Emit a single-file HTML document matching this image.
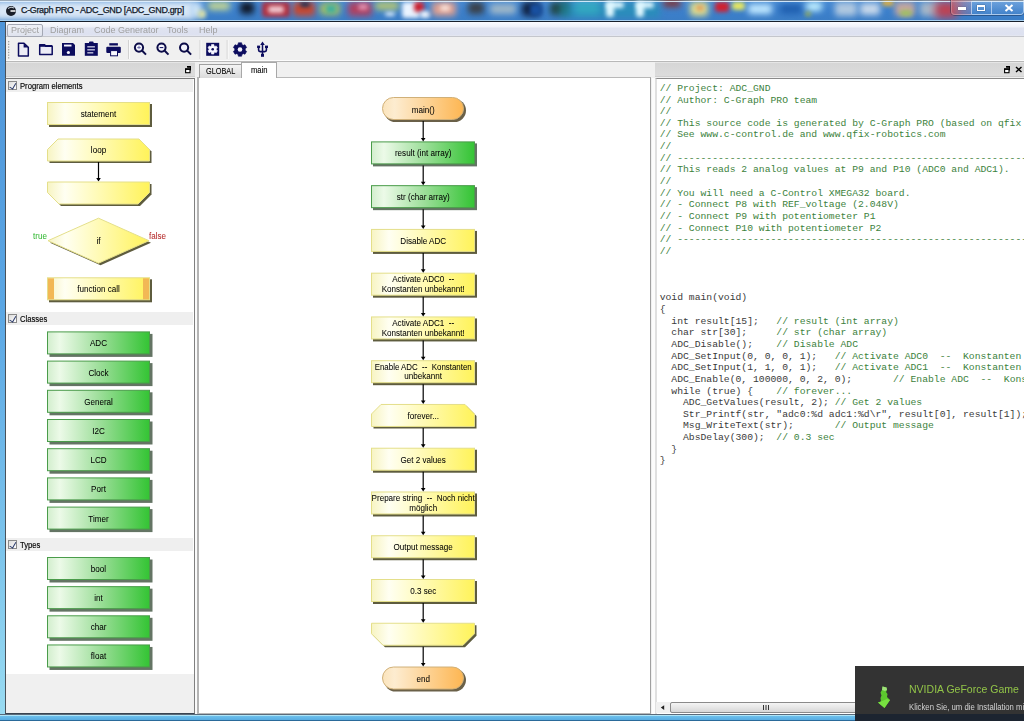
<!DOCTYPE html>
<html><head><meta charset="utf-8">
<style>
*{box-sizing:border-box}
html,body{margin:0;padding:0}
body{width:1024px;height:721px;overflow:hidden;position:relative;background:#f0f0f0;font-family:"Liberation Sans",sans-serif;color:#000}
.a{position:absolute}
#title{left:0;top:0;width:1024px;height:22px;background:linear-gradient(#4a8cd4,#3c80cc 50%,#3a7cc4);overflow:hidden}
#frameL{left:0;top:22px;width:5px;height:700px;background:linear-gradient(#4e94d8,#5aa6e4 40%,#7cc4ec 75%,#9adcf2)}
#frameB{left:0;top:714px;width:1024px;height:7px;background:linear-gradient(#5a6a7a 0,#5a6a7a 1px,#b0e4f6 1px,#b0e4f6 2px,#6cc0ec 2px,#58ace2 6px,#2a6a9a 6px)}
#menubar{left:5px;top:22px;width:1019px;height:15px;background:linear-gradient(#fbfcff,#eef0f8 5px,#dfe3f0 6px,#dde1f0 13px,#e8eaf0 14px);border-bottom:1px solid #c4c6cc}
#toolbar{left:5px;top:37px;width:1019px;height:25px;background:linear-gradient(#f0f0f0 23px,#fcfcfc 23px);border-bottom:1px solid #b8b8b8}
.menu{position:absolute;top:3px;font-size:9px;color:#a0a0a0;will-change:transform}
.lph{background:linear-gradient(#d6d6d6,#dcdcdc);border-top:1px solid #e6e6e6;border-bottom:1px solid #cfcfcf}
.grp{position:absolute;left:6px;width:187px;height:13px;background:#efefef}
.grp .cb{position:absolute;left:1.5px;top:2px;width:9px;height:9px;border:1px solid #8a8a8a;background:linear-gradient(135deg,#dcdcdc,#fff)}
.grp .cb::after{content:"";position:absolute;left:2px;top:0px;width:2.5px;height:5.5px;border:solid #2a3a6a;border-width:0 1.2px 1.2px 0;transform:rotate(30deg)}
.grp span{position:absolute;left:14px;top:1.5px;font-size:8.5px;transform:scaleX(0.9);transform-origin:0 0;white-space:nowrap;-webkit-text-stroke:0.15px #000}
pre#code{position:absolute;left:659.7px;top:82.9px;margin:0;font-family:"Liberation Mono",monospace;font-size:9.73px;line-height:11.64px;color:#3a3a3a}
.cm{color:#3c823c}
</style></head><body>
<div id="title" class="a">
<div class="a" style="left:0;top:0;width:1024px;height:1px;background:#6a7a8a"></div>
<div class="a" style="left:-6px;top:1px;width:200px;height:19px;background:rgba(225,236,248,0.95);border-radius:3px;filter:blur(3px)"></div>
<div class="a" style="left:190px;top:2px;width:12px;height:16px;background:#cce4f8;border-radius:3px;filter:blur(3px)"></div>
<div class="a" style="left:198px;top:10px;width:8px;height:8px;background:#d8e0a8;border-radius:3px;filter:blur(2px)"></div>
<div class="a" style="left:208px;top:2px;width:22px;height:8px;background:#c8d890;border-radius:3px;filter:blur(3px)"></div>
<div class="a" style="left:240px;top:2px;width:14px;height:12px;background:#101828;border-radius:3px;filter:blur(3px)"></div>
<div class="a" style="left:262px;top:2px;width:28px;height:15px;background:#b03040;border-radius:3px;filter:blur(2px)"></div>
<div class="a" style="left:268px;top:6px;width:16px;height:7px;background:#f0c8d0;border-radius:3px;filter:blur(2px)"></div>
<div class="a" style="left:293px;top:2px;width:22px;height:14px;background:#c84830;border-radius:3px;filter:blur(3px)"></div>
<div class="a" style="left:300px;top:2px;width:10px;height:5px;background:#203050;border-radius:3px;filter:blur(2px)"></div>
<div class="a" style="left:320px;top:3px;width:20px;height:12px;background:#a8c060;border-radius:3px;filter:blur(3px)"></div>
<div class="a" style="left:326px;top:5px;width:10px;height:8px;background:#40b0a0;border-radius:3px;filter:blur(2px)"></div>
<div class="a" style="left:348px;top:2px;width:24px;height:14px;background:#b04060;border-radius:3px;filter:blur(3px)"></div>
<div class="a" style="left:358px;top:4px;width:10px;height:6px;background:#e090b0;border-radius:3px;filter:blur(2px)"></div>
<div class="a" style="left:375px;top:2px;width:24px;height:8px;background:#b8c870;border-radius:3px;filter:blur(3px)"></div>
<div class="a" style="left:385px;top:12px;width:10px;height:4px;background:#e0f0ff;border-radius:3px;filter:blur(2px)"></div>
<div class="a" style="left:402px;top:2px;width:18px;height:16px;background:#eaf4ff;border-radius:3px;filter:blur(2px)"></div>
<div class="a" style="left:414px;top:2px;width:10px;height:10px;background:#c82030;border-radius:3px;filter:blur(2px)"></div>
<div class="a" style="left:420px;top:11px;width:10px;height:7px;background:#f0f6ff;border-radius:3px;filter:blur(2px)"></div>
<div class="a" style="left:432px;top:2px;width:24px;height:14px;background:#e0a090;border-radius:3px;filter:blur(3px)"></div>
<div class="a" style="left:440px;top:5px;width:10px;height:6px;background:#f6e0d8;border-radius:3px;filter:blur(2px)"></div>
<div class="a" style="left:468px;top:2px;width:16px;height:12px;background:#3a4048;border-radius:3px;filter:blur(3px)"></div>
<div class="a" style="left:490px;top:4px;width:26px;height:10px;background:#a0b8c8;border-radius:3px;filter:blur(3px)"></div>
<div class="a" style="left:522px;top:2px;width:18px;height:14px;background:#102040;border-radius:3px;filter:blur(3px)"></div>
<div class="a" style="left:530px;top:4px;width:12px;height:12px;background:#1850a0;border-radius:3px;filter:blur(2px)"></div>
<div class="a" style="left:550px;top:2px;width:20px;height:13px;background:#204848;border-radius:3px;filter:blur(3px)"></div>
<div class="a" style="left:575px;top:2px;width:24px;height:12px;background:#50c0d8;border-radius:3px;filter:blur(3px)"></div>
<div class="a" style="left:560px;top:2px;width:100px;height:16px;background:rgba(32,150,176,0.6);border-radius:3px;filter:blur(3px)"></div>
<div class="a" style="left:606px;top:2px;width:18px;height:6px;background:#e0f8ff;border-radius:3px;filter:blur(2px)"></div>
<div class="a" style="left:606px;top:2px;width:8px;height:15px;background:#e0f8ff;border-radius:3px;filter:blur(2px)"></div>
<div class="a" style="left:636px;top:2px;width:18px;height:6px;background:#e0f8ff;border-radius:3px;filter:blur(2px)"></div>
<div class="a" style="left:636px;top:2px;width:8px;height:15px;background:#e0f8ff;border-radius:3px;filter:blur(2px)"></div>
<div class="a" style="left:663px;top:0px;width:18px;height:7px;background:#803030;border-radius:3px;filter:blur(3px)"></div>
<div class="a" style="left:690px;top:2px;width:18px;height:14px;background:#e0e090;border-radius:3px;filter:blur(3px)"></div>
<div class="a" style="left:696px;top:5px;width:8px;height:6px;background:#e0a060;border-radius:3px;filter:blur(2px)"></div>
<div class="a" style="left:715px;top:2px;width:14px;height:10px;background:#d02030;border-radius:3px;filter:blur(2px)"></div>
<div class="a" style="left:732px;top:2px;width:13px;height:8px;background:#e8e860;border-radius:3px;filter:blur(2px)"></div>
<div class="a" style="left:748px;top:4px;width:24px;height:10px;background:#c0e8ff;border-radius:3px;filter:blur(3px)"></div>
<div class="a" style="left:780px;top:4px;width:22px;height:10px;background:#2060b0;border-radius:3px;filter:blur(3px)"></div>
<div class="a" style="left:806px;top:2px;width:16px;height:9px;background:#c0f0ff;border-radius:3px;filter:blur(3px)"></div>
<div class="a" style="left:805px;top:12px;width:6px;height:4px;background:#a0b040;border-radius:3px;filter:blur(2px)"></div>
<div class="a" style="left:835px;top:2px;width:22px;height:14px;background:#b0c8e0;border-radius:3px;filter:blur(3px)"></div>
<div class="a" style="left:860px;top:3px;width:20px;height:12px;background:#c8d8ea;border-radius:3px;filter:blur(3px)"></div>
<div class="a" style="left:882px;top:0px;width:12px;height:6px;background:#e0b040;border-radius:3px;filter:blur(2px)"></div>
<div class="a" style="left:895px;top:2px;width:20px;height:14px;background:#c8a8a0;border-radius:3px;filter:blur(3px)"></div>
<div class="a" style="left:900px;top:10px;width:12px;height:6px;background:#a0c060;border-radius:3px;filter:blur(2px)"></div>
<div class="a" style="left:920px;top:2px;width:20px;height:14px;background:#a8b8c8;border-radius:3px;filter:blur(3px)"></div>
<div class="a" style="left:935px;top:2px;width:22px;height:16px;background:#c04050;border-radius:3px;filter:blur(4px)"></div>
<div class="a" style="left:0;top:1px;width:1024px;height:1px;background:rgba(230,245,255,0.85)"></div>
<div class="a" style="left:0;top:20px;width:1024px;height:1px;background:#a8d0f0"></div><div class="a" style="left:0;top:21px;width:1024px;height:1px;background:#18202c"></div>
<svg class="a" style="left:5px;top:5px" width="12" height="12"><circle cx="6" cy="6" r="5" fill="#1a1e28"/><path d="M3,3.5 Q6,1 9,3" stroke="#d0d8e0" stroke-width="1" fill="none"/><path d="M5.5,6 H10.5" stroke="#f0f0f0" stroke-width="1.6"/></svg>
<span class="a" style="left:21px;top:5px;font-size:9px;letter-spacing:-0.35px;color:#101828;-webkit-text-stroke:0.25px #101828;white-space:nowrap">C-Graph PRO - ADC_GND [ADC_GND.grp]</span>
<div class="a" style="left:951px;top:0;width:73px;height:15px;border:1px solid rgba(230,240,255,0.55);border-top:none;border-radius:0 0 4px 4px;box-shadow:0 0 0 1px rgba(20,40,70,0.45);background:linear-gradient(rgba(255,255,255,0.22),rgba(120,160,210,0.15))"></div>
<div class="a" style="left:951px;top:0;width:21px;height:15px;border-radius:0 0 0 3px;background:linear-gradient(90deg,rgba(200,80,90,0.55),rgba(150,110,150,0.25))"></div>
<div class="a" style="left:971px;top:1px;width:1px;height:13px;background:rgba(230,240,255,0.6)"></div>
<div class="a" style="left:991px;top:1px;width:1px;height:13px;background:rgba(230,240,255,0.6)"></div>
<div class="a" style="left:958px;top:7px;width:8px;height:2.5px;background:#fff;box-shadow:0 0 1px #234"></div>
<div class="a" style="left:977px;top:4.5px;width:8px;height:6px;border:1px solid #fff;border-top-width:2px;box-shadow:0 0 1px #234"></div>
<svg class="a" style="left:1004px;top:4px" width="10" height="8"><path d="M1.5,1 L8.5,7 M8.5,1 L1.5,7" stroke="#fff" stroke-width="2"/></svg>
</div>
<div id="frameL" class="a"></div>
<div id="menubar" class="a">
  <div class="a" style="left:2px;top:1.5px;width:36px;height:13px;border:1px solid #a4a8b4;border-radius:2px;background:linear-gradient(#eef0f6,#dfe3ee)"></div>
  <span class="menu" style="left:6px">Project</span>
  <span class="menu" style="left:45px">Diagram</span>
  <span class="menu" style="left:89px">Code Generator</span>
  <span class="menu" style="left:162px">Tools</span>
  <span class="menu" style="left:194px">Help</span>
</div>
<div id="toolbar" class="a"></div>
<svg class="a" style="left:0;top:0" width="1024" height="62" viewBox="0 0 1024 62"><rect x="8" y="41.0" width="1.3" height="1.3" fill="#a0a0a0"/>
<rect x="8" y="43.7" width="1.3" height="1.3" fill="#a0a0a0"/>
<rect x="8" y="46.4" width="1.3" height="1.3" fill="#a0a0a0"/>
<rect x="8" y="49.1" width="1.3" height="1.3" fill="#a0a0a0"/>
<rect x="8" y="51.8" width="1.3" height="1.3" fill="#a0a0a0"/>
<rect x="8" y="54.5" width="1.3" height="1.3" fill="#a0a0a0"/>
<rect x="8" y="57.2" width="1.3" height="1.3" fill="#a0a0a0"/>
<path d="M18.5,43.2 H24 L28.3,47.2 V56 H18.5 Z" fill="#ececf6" stroke="#0c0c5e" stroke-width="1.5" stroke-linejoin="round"/>
<path d="M23.6,43.2 V47.6 H28.3 Z" fill="#0c0c5e"/>
<path d="M39.7,54.6 V44.7 H44.6 L45.8,46.3 H52.2 V54.6 Z" fill="#ececf6" stroke="#0c0c5e" stroke-width="1.5" stroke-linejoin="round"/>
<rect x="39.7" y="45" width="12.5" height="1.8" fill="#0c0c5e"/>
<path d="M62,43 H73 L75,45 V55.8 H62 Z" fill="#0c0c5e"/>
<rect x="64" y="44.6" width="7.5" height="1.9" fill="#f4f4ff"/>
<circle cx="68.4" cy="52.5" r="1.6" fill="#f4f4ff"/>
<rect x="84.8" y="43" width="13" height="12.8" fill="#0c0c5e"/>
<rect x="89" y="41.6" width="4.6" height="2.5" rx="1" fill="#0c0c5e"/>
<rect x="87.3" y="46.3" width="7.6" height="1.1" fill="#f4f4ff"/>
<rect x="87.3" y="49.3" width="7.6" height="1.1" fill="#f4f4ff"/>
<rect x="87.3" y="52.3" width="6" height="1.1" fill="#f4f4ff"/>
<rect x="109.3" y="43.2" width="8.6" height="2.3" fill="#0c0c5e"/>
<rect x="106.3" y="46.8" width="14.5" height="6.3" rx="1" fill="#0c0c5e"/>
<rect x="110.6" y="50.6" width="6.9" height="5.2" fill="#fafaff" stroke="#0c0c5e" stroke-width="1"/>
<rect x="128" y="40" width="1" height="19" fill="#d2d2d2"/><rect x="129" y="40" width="1" height="19" fill="#fafafa"/>
<rect x="199.5" y="40" width="1" height="19" fill="#d2d2d2"/><rect x="200.5" y="40" width="1" height="19" fill="#fafafa"/>
<rect x="226.7" y="40" width="1" height="19" fill="#d2d2d2"/><rect x="227.7" y="40" width="1" height="19" fill="#fafafa"/>
<circle cx="139" cy="47.6" r="4.1" fill="#f4f4fc" stroke="#0c0c48" stroke-width="2"/>
<line x1="142.2" y1="50.800000000000004" x2="146" y2="54.6" stroke="#0c0c48" stroke-width="2"/>
<path d="M137.2,47.6 H140.8 M139,45.800000000000004 V48.800000000000004" stroke="#6060a0" stroke-width="0.9"/>
<circle cx="161.5" cy="47.6" r="4.1" fill="#f4f4fc" stroke="#0c0c48" stroke-width="2"/>
<line x1="164.7" y1="50.800000000000004" x2="168.5" y2="54.6" stroke="#0c0c48" stroke-width="2"/>
<path d="M159.7,47.6 H163.3" stroke="#0c0c5e" stroke-width="1"/>
<circle cx="184.1" cy="47.6" r="4.1" fill="#f4f4fc" stroke="#0c0c48" stroke-width="2"/>
<line x1="187.29999999999998" y1="50.800000000000004" x2="191.1" y2="54.6" stroke="#0c0c48" stroke-width="2"/>
<rect x="206.2" y="42.8" width="13" height="13" fill="#0c0c5e"/>
<polygon points="211.39,45.95 211.52,44.54 213.88,44.54 214.01,45.95 214.95,46.49 216.23,45.90 217.41,47.95 216.26,48.76 216.26,49.84 217.41,50.65 216.23,52.70 214.95,52.11 214.01,52.65 213.88,54.06 211.52,54.06 211.39,52.65 210.45,52.11 209.17,52.70 207.99,50.65 209.14,49.84 209.14,48.76 207.99,47.95 209.17,45.90 210.45,46.49" fill="#f6f6ff" stroke="#f6f6ff" stroke-width="0.6" stroke-linejoin="round"/>
<circle cx="212.7" cy="49.3" r="1.3" fill="#0c0c5e"/>
<polygon points="238.07,44.57 238.34,42.80 241.66,42.80 241.93,44.57 243.31,45.36 244.97,44.71 246.63,47.59 245.24,48.71 245.24,50.29 246.63,51.41 244.97,54.29 243.31,53.64 241.93,54.43 241.66,56.20 238.34,56.20 238.07,54.43 236.69,53.64 235.03,54.29 233.37,51.41 234.76,50.29 234.76,48.71 233.37,47.59 235.03,44.71 236.69,45.36" fill="#0c0c5e" stroke="#0c0c5e" stroke-width="0.6" stroke-linejoin="round"/>
<circle cx="240" cy="49.5" r="2.3" fill="#f4f4fc"/>
<path d="M262.5,43.8 V55" stroke="#0c0c5e" stroke-width="1.5"/>
<polygon points="262.5,41.5 260.2,44.9 264.8,44.9" fill="#0c0c5e"/>
<path d="M258.6,47 V50 Q258.6,51.6 260.2,51.6 H264.8 Q266.4,51.6 266.4,50 V47" fill="none" stroke="#0c0c5e" stroke-width="1.6"/>
<rect x="257.1" y="45.6" width="3" height="2.4" fill="#0c0c5e"/><rect x="265" y="45.6" width="3" height="2.4" fill="#0c0c5e"/>
<rect x="261" y="53.8" width="3" height="3" fill="#0c0c5e"/></svg>

<!-- left panel -->
<div class="a lph" style="left:5px;top:62px;width:190px;height:15px"></div>
<div class="a" style="left:5px;top:78px;width:190px;height:636px;background:#fff;border:1px solid #7a7a7a;border-left-color:#4a525a;border-right-color:#808080;border-bottom-color:#3a4450"></div>
<div class="a" style="left:5px;top:22px;width:1px;height:56px;background:#4a525a"></div>
<div class="a" style="left:6px;top:674px;width:188px;height:39px;background:#f0f0f0"></div>
<div class="grp" style="top:79px"><div class="cb"></div><span>Program elements</span></div>
<div class="grp" style="top:312px"><div class="cb"></div><span>Classes</span></div>
<div class="grp" style="top:538px"><div class="cb"></div><span>Types</span></div>

<!-- middle panel -->
<div class="a" style="left:195px;top:78px;width:2px;height:636px;background:#fafafa"></div>
<div class="a" style="left:197px;top:77px;width:454px;height:637px;background:#fff;border:1px solid #b8b8b8;border-left:2px solid #b4b4b4;border-right:1px solid #a0a0a0"></div>
<div class="a" style="left:652px;top:78px;width:3px;height:636px;background:#fcfcfc"></div>

<!-- right panel -->
<div class="a lph" style="left:655px;top:62px;width:369px;height:15px"></div>
<div class="a" style="left:655px;top:78px;width:369px;height:636px;background:#fff;border-left:2px solid #e0e0e0;border-top:1px solid #8a8a8a;overflow:hidden"></div>
<pre id="code"><span class="cm">// Project: ADC_GND</span>
<span class="cm">// Author: C-Graph PRO team</span>
<span class="cm">//</span>
<span class="cm">// This source code is generated by C-Graph PRO (based on qfix robotics)</span>
<span class="cm">// See www.c-control.de and www.qfix-robotics.com</span>
<span class="cm">//</span>
<span class="cm">// --------------------------------------------------------------------------------</span>
<span class="cm">// This reads 2 analog values at P9 and P10 (ADC0 and ADC1).</span>
<span class="cm">//</span>
<span class="cm">// You will need a C-Control XMEGA32 board.</span>
<span class="cm">// - Connect P8 with REF_voltage (2.048V)</span>
<span class="cm">// - Connect P9 with potentiometer P1</span>
<span class="cm">// - Connect P10 with potentiometer P2</span>
<span class="cm">// --------------------------------------------------------------------------------</span>
<span class="cm">//</span>



void main(void)
{
  int result[15];   <span class="cm">// result (int array)</span>
  char str[30];     <span class="cm">// str (char array)</span>
  ADC_Disable();    <span class="cm">// Disable ADC</span>
  ADC_SetInput(0, 0, 0, 1);   <span class="cm">// Activate ADC0  --  Konstanten unbekannt!</span>
  ADC_SetInput(1, 1, 0, 1);   <span class="cm">// Activate ADC1  --  Konstanten unbekannt!</span>
  ADC_Enable(0, 100000, 0, 2, 0);       <span class="cm">// Enable ADC  --  Konstanten unbekannt</span>
  while (true) {    <span class="cm">// forever...</span>
    ADC_GetValues(result, 2); <span class="cm">// Get 2 values</span>
    Str_Printf(str, &quot;adc0:%d adc1:%d\r&quot;, result[0], result[1]);
    Msg_WriteText(str);       <span class="cm">// Output message</span>
    AbsDelay(300);  <span class="cm">// 0.3 sec</span>
  }
}</pre>

<svg class="a" style="left:0;top:0" width="1024" height="721" viewBox="0 0 1024 721" font-family="Liberation Sans"><defs>
<linearGradient id="gy" x1="0" x2="1" y1="0" y2="0"><stop offset="0" stop-color="#f7f4c2"/><stop offset="0.17" stop-color="#fffff2"/><stop offset="1" stop-color="#fff35a"/></linearGradient>
<linearGradient id="gg" x1="0" x2="1" y1="0" y2="0"><stop offset="0" stop-color="#d2eecd"/><stop offset="0.12" stop-color="#ecfae8"/><stop offset="0.5" stop-color="#9fdf9c"/><stop offset="1" stop-color="#34c434"/></linearGradient>
<linearGradient id="go" x1="0" x2="1" y1="0" y2="0"><stop offset="0" stop-color="#fbe4bc"/><stop offset="0.15" stop-color="#fdecd0"/><stop offset="1" stop-color="#fdb652"/></linearGradient>
</defs>
<rect x="384" y="99" width="82" height="23" rx="11.5" fill="#6a6048"/><rect x="382.5" y="97.5" width="81" height="22" rx="11.0" fill="url(#go)" stroke="#d0b078" stroke-width="1"/>
<text transform="translate(423.2,112.6) scale(0.93,1)" font-size="8.7" text-anchor="middle" fill="#000" stroke="#000" stroke-width="0.04">main()</text>
<rect x="373" y="143.4" width="104" height="23" fill="#647464"/><rect x="371.5" y="141.9" width="103" height="22" fill="url(#gg)" stroke="#4a9c4a" stroke-width="1"/>
<text transform="translate(423.2,156.4) scale(0.93,1)" font-size="8.7" text-anchor="middle" fill="#000" stroke="#000" stroke-width="0.04">result (int array)</text>
<rect x="373" y="187.16" width="104" height="23" fill="#647464"/><rect x="371.5" y="185.66" width="103" height="22" fill="url(#gg)" stroke="#4a9c4a" stroke-width="1"/>
<text transform="translate(423.2,200.16) scale(0.93,1)" font-size="8.7" text-anchor="middle" fill="#000" stroke="#000" stroke-width="0.04">str (char array)</text>
<rect x="373" y="230.92000000000002" width="104" height="23" fill="#5e5c3e"/><rect x="371.5" y="229.42000000000002" width="103" height="22" fill="url(#gy)" stroke="#e4df8a" stroke-width="1"/>
<text transform="translate(423.2,243.92000000000002) scale(0.93,1)" font-size="8.7" text-anchor="middle" fill="#000" stroke="#000" stroke-width="0.04">Disable ADC</text>
<rect x="373" y="274.68" width="104" height="23" fill="#5e5c3e"/><rect x="371.5" y="273.18" width="103" height="22" fill="url(#gy)" stroke="#e4df8a" stroke-width="1"/>
<text transform="translate(423.2,282.48) scale(0.93,1)" font-size="8.7" text-anchor="middle" fill="#000" stroke="#000" stroke-width="0.04">Activate ADC0&#160; --</text>
<text transform="translate(423.2,291.88) scale(0.93,1)" font-size="8.7" text-anchor="middle" fill="#000" stroke="#000" stroke-width="0.04">Konstanten unbekannt!</text>
<rect x="373" y="318.44" width="104" height="23" fill="#5e5c3e"/><rect x="371.5" y="316.94" width="103" height="22" fill="url(#gy)" stroke="#e4df8a" stroke-width="1"/>
<text transform="translate(423.2,326.24) scale(0.93,1)" font-size="8.7" text-anchor="middle" fill="#000" stroke="#000" stroke-width="0.04">Activate ADC1&#160; --</text>
<text transform="translate(423.2,335.64) scale(0.93,1)" font-size="8.7" text-anchor="middle" fill="#000" stroke="#000" stroke-width="0.04">Konstanten unbekannt!</text>
<rect x="373" y="362.2" width="104" height="23" fill="#5e5c3e"/><rect x="371.5" y="360.7" width="103" height="22" fill="url(#gy)" stroke="#e4df8a" stroke-width="1"/>
<text transform="translate(423.2,370.0) scale(0.91,1)" font-size="8.7" text-anchor="middle" fill="#000" stroke="#000" stroke-width="0.04">Enable ADC&#160; --&#160; Konstanten</text>
<text transform="translate(423.2,379.4) scale(0.93,1)" font-size="8.7" text-anchor="middle" fill="#000" stroke="#000" stroke-width="0.04">unbekannt</text>
<polygon points="373.5,428.46000000000004 373.5,415.96000000000004 383,406.46000000000004 467,406.46000000000004 476.5,415.96000000000004 476.5,428.46000000000004" fill="#5e5c3e"/><polygon points="371.5,426.46000000000004 371.5,413.96000000000004 381,404.46000000000004 465,404.46000000000004 474.5,413.96000000000004 474.5,426.46000000000004" fill="url(#gy)" stroke="#e4df8a" stroke-width="1"/>
<text transform="translate(423.2,418.96000000000004) scale(0.93,1)" font-size="8.7" text-anchor="middle" fill="#000" stroke="#000" stroke-width="0.04">forever...</text>
<rect x="373" y="449.72" width="104" height="23" fill="#5e5c3e"/><rect x="371.5" y="448.22" width="103" height="22" fill="url(#gy)" stroke="#e4df8a" stroke-width="1"/>
<text transform="translate(423.2,462.72) scale(0.93,1)" font-size="8.7" text-anchor="middle" fill="#000" stroke="#000" stroke-width="0.04">Get 2 values</text>
<rect x="373" y="493.48" width="104" height="23" fill="#5e5c3e"/><rect x="371.5" y="491.98" width="103" height="22" fill="url(#gy)" stroke="#e4df8a" stroke-width="1"/>
<text transform="translate(423.2,501.28000000000003) scale(0.93,1)" font-size="8.7" text-anchor="middle" fill="#000" stroke="#000" stroke-width="0.04">Prepare string&#160; --&#160; Noch nicht</text>
<text transform="translate(423.2,510.68) scale(0.93,1)" font-size="8.7" text-anchor="middle" fill="#000" stroke="#000" stroke-width="0.04">möglich</text>
<rect x="373" y="537.24" width="104" height="23" fill="#5e5c3e"/><rect x="371.5" y="535.74" width="103" height="22" fill="url(#gy)" stroke="#e4df8a" stroke-width="1"/>
<text transform="translate(423.2,550.24) scale(0.93,1)" font-size="8.7" text-anchor="middle" fill="#000" stroke="#000" stroke-width="0.04">Output message</text>
<rect x="373" y="581.0" width="104" height="23" fill="#5e5c3e"/><rect x="371.5" y="579.5" width="103" height="22" fill="url(#gy)" stroke="#e4df8a" stroke-width="1"/>
<text transform="translate(423.2,594.0) scale(0.93,1)" font-size="8.7" text-anchor="middle" fill="#000" stroke="#000" stroke-width="0.04">0.3 sec</text>
<polygon points="373.5,625.26 476.5,625.26 476.5,635.76 465,647.26 385,647.26 373.5,635.76" fill="#5e5c3e"/><polygon points="371.5,623.26 474.5,623.26 474.5,633.76 463,645.26 383,645.26 371.5,633.76" fill="url(#gy)" stroke="#e4df8a" stroke-width="1"/>
<rect x="384" y="668.52" width="82" height="23" rx="11.5" fill="#6a6048"/><rect x="382.5" y="667.02" width="81" height="22" rx="11.0" fill="url(#go)" stroke="#d0b078" stroke-width="1"/>
<text transform="translate(423.2,681.8199999999999) scale(0.93,1)" font-size="8.7" text-anchor="middle" fill="#000" stroke="#000" stroke-width="0.04">end</text>
<line x1="423.2" y1="121" x2="423.2" y2="139.4" stroke="#000" stroke-width="1.2"/><polygon points="420.9,137.9 425.5,137.9 423.2,141.4" fill="#000"/>
<line x1="423.2" y1="165.4" x2="423.2" y2="183.16" stroke="#000" stroke-width="1.2"/><polygon points="420.9,181.66 425.5,181.66 423.2,185.16" fill="#000"/>
<line x1="423.2" y1="209.16" x2="423.2" y2="226.92000000000002" stroke="#000" stroke-width="1.2"/><polygon points="420.9,225.42000000000002 425.5,225.42000000000002 423.2,228.92000000000002" fill="#000"/>
<line x1="423.2" y1="252.92000000000002" x2="423.2" y2="270.68" stroke="#000" stroke-width="1.2"/><polygon points="420.9,269.18 425.5,269.18 423.2,272.68" fill="#000"/>
<line x1="423.2" y1="296.68" x2="423.2" y2="314.44" stroke="#000" stroke-width="1.2"/><polygon points="420.9,312.94 425.5,312.94 423.2,316.44" fill="#000"/>
<line x1="423.2" y1="340.44" x2="423.2" y2="358.2" stroke="#000" stroke-width="1.2"/><polygon points="420.9,356.7 425.5,356.7 423.2,360.2" fill="#000"/>
<line x1="423.2" y1="384.2" x2="423.2" y2="401.96000000000004" stroke="#000" stroke-width="1.2"/><polygon points="420.9,400.46000000000004 425.5,400.46000000000004 423.2,403.96000000000004" fill="#000"/>
<line x1="423.2" y1="427.96000000000004" x2="423.2" y2="445.72" stroke="#000" stroke-width="1.2"/><polygon points="420.9,444.22 425.5,444.22 423.2,447.72" fill="#000"/>
<line x1="423.2" y1="471.72" x2="423.2" y2="489.48" stroke="#000" stroke-width="1.2"/><polygon points="420.9,487.98 425.5,487.98 423.2,491.48" fill="#000"/>
<line x1="423.2" y1="515.48" x2="423.2" y2="533.24" stroke="#000" stroke-width="1.2"/><polygon points="420.9,531.74 425.5,531.74 423.2,535.24" fill="#000"/>
<line x1="423.2" y1="559.24" x2="423.2" y2="577.0" stroke="#000" stroke-width="1.2"/><polygon points="420.9,575.5 425.5,575.5 423.2,579.0" fill="#000"/>
<line x1="423.2" y1="603.0" x2="423.2" y2="620.76" stroke="#000" stroke-width="1.2"/><polygon points="420.9,619.26 425.5,619.26 423.2,622.76" fill="#000"/>
<line x1="423.2" y1="646.76" x2="423.2" y2="664.52" stroke="#000" stroke-width="1.2"/><polygon points="420.9,663.02 425.5,663.02 423.2,666.52" fill="#000"/>
<rect x="49" y="104" width="103" height="23" fill="#5e5c3e"/><rect x="47.5" y="102.5" width="102" height="22" fill="url(#gy)" stroke="#e4df8a" stroke-width="1"/>
<text transform="translate(98.5,117.2) scale(0.93,1)" font-size="8.7" text-anchor="middle" fill="#000" stroke="#000" stroke-width="0.04">statement</text>
<polygon points="49.5,163.0 49.5,151.5 60,141.0 141,141.0 151.5,151.5 151.5,163.0" fill="#5e5c3e"/><polygon points="47.5,161.0 47.5,149.5 58,139.0 139,139.0 149.5,149.5 149.5,161.0" fill="url(#gy)" stroke="#e4df8a" stroke-width="1"/>
<text transform="translate(98.5,153.3) scale(0.93,1)" font-size="8.7" text-anchor="middle" fill="#000" stroke="#000" stroke-width="0.04">loop</text>
<line x1="98.5" y1="162" x2="98.5" y2="179.5" stroke="#000" stroke-width="1.2"/><polygon points="96.2,178.0 100.8,178.0 98.5,181.5" fill="#000"/>
<polygon points="49.5,184.0 151.5,184.0 151.5,194.5 140,206.0 61,206.0 49.5,194.5" fill="#5e5c3e"/><polygon points="47.5,182.0 149.5,182.0 149.5,192.5 138,204.0 59,204.0 47.5,192.5" fill="url(#gy)" stroke="#e4df8a" stroke-width="1"/>
<polygon points="100.5,220.2 151.0,242.7 100.5,265.2 50.0,242.7" fill="#5e5c3e"/><polygon points="98.5,218.2 149.0,240.7 98.5,263.2 48.0,240.7" fill="url(#gy)" stroke="#e4df8a" stroke-width="1"/>
<text transform="translate(98.5,243.7) scale(0.93,1)" font-size="8.7" text-anchor="middle" fill="#000" stroke="#000" stroke-width="0.04">if</text>
<text transform="translate(40,239.3) scale(0.93,1)" font-size="8.7" text-anchor="middle" fill="#34b834" stroke="#34b834" stroke-width="0.04">true</text>
<text transform="translate(157.5,239.3) scale(0.93,1)" font-size="8.7" text-anchor="middle" fill="#b42828" stroke="#b42828" stroke-width="0.04">false</text>
<rect x="49" y="279.3" width="103" height="23" fill="#5e5c3e"/><rect x="47.5" y="277.8" width="102" height="22" fill="url(#gy)" stroke="#e4df8a" stroke-width="1"/>
<rect x="48" y="278.3" width="6" height="21" fill="#f2b855"/>
<rect x="143" y="278.3" width="6" height="21" fill="#f2b855"/>
<text transform="translate(98.5,292.3) scale(0.93,1)" font-size="8.7" text-anchor="middle" fill="#000" stroke="#000" stroke-width="0.04">function call</text>
<rect x="49.5" y="333.9" width="103" height="23" fill="#647464"/><rect x="47.5" y="331.9" width="102" height="22" fill="url(#gg)" stroke="#4a9c4a" stroke-width="1"/>
<text transform="translate(98.5,346.4) scale(0.93,1)" font-size="8.7" text-anchor="middle" fill="#000" stroke="#000" stroke-width="0.04">ADC</text>
<rect x="49.5" y="363.09999999999997" width="103" height="23" fill="#647464"/><rect x="47.5" y="361.09999999999997" width="102" height="22" fill="url(#gg)" stroke="#4a9c4a" stroke-width="1"/>
<text transform="translate(98.5,375.59999999999997) scale(0.93,1)" font-size="8.7" text-anchor="middle" fill="#000" stroke="#000" stroke-width="0.04">Clock</text>
<rect x="49.5" y="392.29999999999995" width="103" height="23" fill="#647464"/><rect x="47.5" y="390.29999999999995" width="102" height="22" fill="url(#gg)" stroke="#4a9c4a" stroke-width="1"/>
<text transform="translate(98.5,404.79999999999995) scale(0.93,1)" font-size="8.7" text-anchor="middle" fill="#000" stroke="#000" stroke-width="0.04">General</text>
<rect x="49.5" y="421.5" width="103" height="23" fill="#647464"/><rect x="47.5" y="419.5" width="102" height="22" fill="url(#gg)" stroke="#4a9c4a" stroke-width="1"/>
<text transform="translate(98.5,434.0) scale(0.93,1)" font-size="8.7" text-anchor="middle" fill="#000" stroke="#000" stroke-width="0.04">I2C</text>
<rect x="49.5" y="450.7" width="103" height="23" fill="#647464"/><rect x="47.5" y="448.7" width="102" height="22" fill="url(#gg)" stroke="#4a9c4a" stroke-width="1"/>
<text transform="translate(98.5,463.2) scale(0.93,1)" font-size="8.7" text-anchor="middle" fill="#000" stroke="#000" stroke-width="0.04">LCD</text>
<rect x="49.5" y="479.9" width="103" height="23" fill="#647464"/><rect x="47.5" y="477.9" width="102" height="22" fill="url(#gg)" stroke="#4a9c4a" stroke-width="1"/>
<text transform="translate(98.5,492.4) scale(0.93,1)" font-size="8.7" text-anchor="middle" fill="#000" stroke="#000" stroke-width="0.04">Port</text>
<rect x="49.5" y="509.09999999999997" width="103" height="23" fill="#647464"/><rect x="47.5" y="507.09999999999997" width="102" height="22" fill="url(#gg)" stroke="#4a9c4a" stroke-width="1"/>
<text transform="translate(98.5,521.5999999999999) scale(0.93,1)" font-size="8.7" text-anchor="middle" fill="#000" stroke="#000" stroke-width="0.04">Timer</text>
<rect x="49.5" y="559.5" width="103" height="23" fill="#647464"/><rect x="47.5" y="557.5" width="102" height="22" fill="url(#gg)" stroke="#4a9c4a" stroke-width="1"/>
<text transform="translate(98.5,572.0) scale(0.93,1)" font-size="8.7" text-anchor="middle" fill="#000" stroke="#000" stroke-width="0.04">bool</text>
<rect x="49.5" y="588.65" width="103" height="23" fill="#647464"/><rect x="47.5" y="586.65" width="102" height="22" fill="url(#gg)" stroke="#4a9c4a" stroke-width="1"/>
<text transform="translate(98.5,601.15) scale(0.93,1)" font-size="8.7" text-anchor="middle" fill="#000" stroke="#000" stroke-width="0.04">int</text>
<rect x="49.5" y="617.8" width="103" height="23" fill="#647464"/><rect x="47.5" y="615.8" width="102" height="22" fill="url(#gg)" stroke="#4a9c4a" stroke-width="1"/>
<text transform="translate(98.5,630.3) scale(0.93,1)" font-size="8.7" text-anchor="middle" fill="#000" stroke="#000" stroke-width="0.04">char</text>
<rect x="49.5" y="646.95" width="103" height="23" fill="#647464"/><rect x="47.5" y="644.95" width="102" height="22" fill="url(#gg)" stroke="#4a9c4a" stroke-width="1"/>
<text transform="translate(98.5,659.45) scale(0.93,1)" font-size="8.7" text-anchor="middle" fill="#000" stroke="#000" stroke-width="0.04">float</text>
</svg>

<!-- tabs -->
<div class="a" style="left:199px;top:63.5px;width:43px;height:14px;border:1px solid #a0a0a0;border-bottom:none;background:linear-gradient(#f4f4f4,#e8e8e8 50%,#dadada)"></div>
<span class="a" style="left:205.5px;top:65.5px;font-size:8.5px;transform:scaleX(0.86);transform-origin:0 0;-webkit-text-stroke:0.1px #000">GLOBAL</span>
<div class="a" style="left:241px;top:62px;width:36px;height:16px;border:1px solid #a8a8a8;border-bottom:none;background:#fff"></div>
<span class="a" style="left:251px;top:64.5px;font-size:8.5px;transform:scaleX(0.9);transform-origin:0 0;-webkit-text-stroke:0.1px #000">main</span>
<!-- restore icons -->
<svg class="a" style="left:185px;top:66px" width="7" height="8"><path d="M2.5,1 H5.5 V4.5" fill="none" stroke="#000" stroke-width="1"/><rect x="2" y="0" width="4" height="1.6" fill="#000"/><rect x="0.6" y="3" width="4.4" height="3.7" fill="#fff" stroke="#000" stroke-width="1.1"/><rect x="0" y="2.4" width="5.6" height="1.5" fill="#000"/></svg><svg class="a" style="left:1003.5px;top:66px" width="7" height="8"><path d="M2.5,1 H5.5 V4.5" fill="none" stroke="#000" stroke-width="1"/><rect x="2" y="0" width="4" height="1.6" fill="#000"/><rect x="0.6" y="3" width="4.4" height="3.7" fill="#fff" stroke="#000" stroke-width="1.1"/><rect x="0" y="2.4" width="5.6" height="1.5" fill="#000"/></svg><svg class="a" style="left:1015px;top:66px" width="8" height="7"><path d="M1,1 L6.5,6 M6.5,1 L1,6" stroke="#000" stroke-width="1.4"/></svg>
<!-- scrollbar -->
<div class="a" style="left:656px;top:702px;width:368px;height:11px;background:#f0f0f0"></div>
<div class="a" style="left:670px;top:702px;width:354px;height:11px;border:1px solid #8a8a8a;border-radius:2px;background:linear-gradient(#f4f4f4,#e6e6e6 50%,#d6d6d6)"></div>
<div class="a" style="left:763px;top:705px;width:1px;height:4.5px;background:#333;box-shadow:2.5px 0 #333,5px 0 #333"></div>
<svg class="a" style="left:656px;top:702px" width="14" height="11"><polygon points="4.8,5.6 8.2,3.2 8.2,8" fill="#202020"/></svg>

<div id="frameB" class="a"></div>
<!-- nvidia -->
<div class="a" style="left:855px;top:666px;width:169px;height:48px;background:#333333"></div>
<div class="a" style="left:855px;top:714px;width:169px;height:7px;background:#1c2430"></div>
<span class="a" style="left:909px;top:683px;font-size:11.2px;transform:scaleX(0.94);transform-origin:0 0;color:#92c448;white-space:nowrap">NVIDIA GeForce Game</span>
<span class="a" style="left:909px;top:702px;font-size:8.6px;transform:scaleX(0.9);transform-origin:0 0;color:#d4d4d4;white-space:nowrap">Klicken Sie, um die Installation mit</span>
<svg class="a" style="left:868px;top:680px" width="32" height="36"><polygon points="14.5,6.5 18.5,7.5 19,10 18,12 19.5,14 19,17 21,19 22,20 16.5,28 10,22.5 13,21.5 12.5,18 13.5,15.5 12.5,12.5 14,10" fill="#5cc82e"/><polygon points="14.5,6.5 18.5,7.5 19,10 17,11 14,10" fill="#9ee07a"/><polygon points="13,21.5 19,19 22,20 16.5,28 10,22.5" fill="#78e040"/></svg>

</body></html>
